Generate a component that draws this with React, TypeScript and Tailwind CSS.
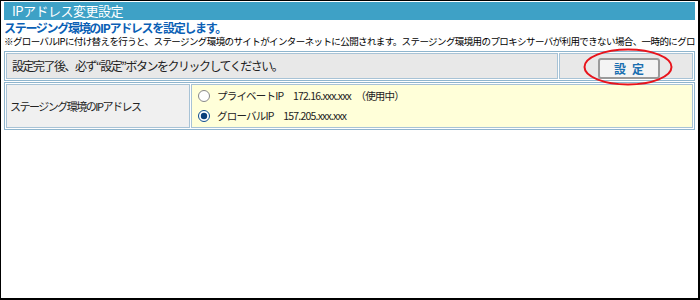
const JP = "font-['Noto_Sans_CJK_JP','Noto_Sans_CJK_JP',sans-serif]";

const IP_OPTIONS = [
  { label: "プライベートIP", ip: "172.16.xxx.xxx", note: "（使用中）", checked: false },
  { label: "グローバルIP", ip: "157.205.xxx.xxx", note: "", checked: true },
];

const Radio = ({ checked }: { checked: boolean }) => (
  <svg width="12" height="12" viewBox="0 0 12 12" aria-hidden="true">
    <circle cx="6" cy="6" r="5.5" fill="#fff" stroke={checked ? "#0a4a8c" : "#888"} strokeWidth="1" />
    {checked && <circle cx="6" cy="6" r="3.2" fill="#0a3f7a" />}
  </svg>
);

export default function App() {
  return (
    <div
      className={`relative w-[700px] h-[300px] overflow-hidden bg-white border border-black border-r-2 border-b-2 pl-[3px] pr-[3px] pt-[1px] ${JP}`}
    >
      {/* タイトル */}
      <div className="h-[18px] bg-[#3ea1c6] text-white text-[13px] leading-[18px] pl-[8px] tracking-[-0.5px] whitespace-nowrap">
        IPアドレス変更設定
      </div>

      {/* 説明 */}
      <p className="mt-[1px] text-[12px] leading-[14px] font-bold tracking-[-1.3px] text-[#0b5fb5] whitespace-nowrap">
        ステージング環境のIPアドレスを設定します。
      </p>
      <p className="text-[9.5px] leading-[12px] tracking-[-0.6px] text-black whitespace-nowrap overflow-hidden">
        ※グローバルIPに付け替えを行うと、ステージング環境のサイトがインターネットに公開されます。ステージング環境用のプロキシサーバが利用できない場合、一時的にグローバルIPをご利用ください。
      </p>

      {/* 設定ボタン行 */}
      <table className="mt-[4px] w-full border-separate border-spacing-[1px] border border-[#8fb5cd] bg-white">
        <tbody>
          <tr>
            <td className="h-[26px] bg-[#e8e8e8] border border-[#a8c3d6] pl-[5px] text-[12px] tracking-[-1.5px] text-[#222] whitespace-nowrap">
              設定完了後、必ず“設定”ボタンをクリックしてください。
            </td>
            <td className="w-[134px] bg-[#e8e8e8] border border-[#a8c3d6] text-center">
              <button className="relative top-[1px] left-[3px] w-[62px] h-[21px] rounded-[3px] border-2 border-[#9a9a9a] bg-[#f4f4f4] text-[12px] font-bold tracking-[6px] pl-[6px] text-[#1a6fb0]">
                設定
              </button>
            </td>
          </tr>
        </tbody>
      </table>

      {/* IPアドレス選択 */}
      <table className="mt-[1px] w-full border-separate border-spacing-[1px] border border-[#8fb5cd] bg-white">
        <tbody>
          <tr>
            <td className="w-[184px] h-[44px] bg-[#f0f0f0] border border-[#a8c3d6] pl-[3px] text-[11px] tracking-[-1.5px] text-[#222] whitespace-nowrap">
              ステージング環境のIPアドレス
            </td>
            <td className="bg-[#ffffd9] border border-[#a8c3d6] pl-[6px]">
              <div className="flex flex-col gap-[8px]">
                {IP_OPTIONS.map((opt) => (
                  <label key={opt.label} className="flex items-center gap-[7px] text-[10.5px] leading-[12px] tracking-[-0.8px] text-[#222] whitespace-nowrap">
                    <Radio checked={opt.checked} />
                    <span>
                      {opt.label}　{opt.ip}{opt.note && `　${opt.note}`}
                    </span>
                  </label>
                ))}
              </div>
            </td>
          </tr>
        </tbody>
      </table>

      {/* 赤い丸 */}
      <svg className="absolute left-[582px] top-[47px]" width="90" height="38" viewBox="0 0 90 38" aria-hidden="true">
        <ellipse cx="45" cy="19" rx="43.5" ry="17.5" fill="none" stroke="#e8141c" strokeWidth="2" />
      </svg>
    </div>
  );
}
